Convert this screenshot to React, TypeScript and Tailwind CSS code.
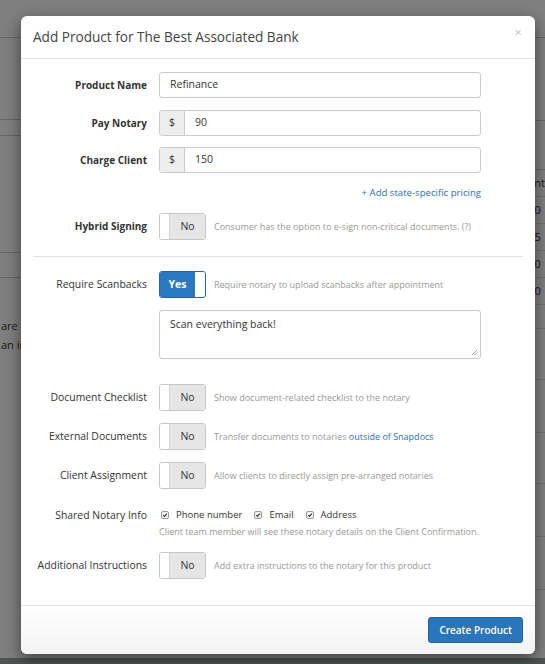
import React from 'react';

const font = { fontFamily: '"Open Sans", "Liberation Sans", sans-serif' };

function Toggle({ on }: { on?: boolean }) {
  if (on) {
    return (
      <div className="flex h-[27px] w-[47px] shrink-0 overflow-hidden rounded-[3px] border border-[#2168a8]">
        <div className="flex flex-1 items-center justify-center bg-[#2a78c1] text-[10.5px] font-bold text-white">Yes</div>
        <div className="w-[10px] rounded-r-[2px] bg-white" />
      </div>
    );
  }
  return (
    <div className="flex h-[27px] w-[47px] shrink-0 overflow-hidden rounded-[3px] border border-[#c8c8c8]">
      <div className="w-[10px] border-r border-[#d4d4d4] bg-white" />
      <div className="flex flex-1 items-center justify-center bg-[#e6e6e6] text-[10.5px] text-[#333]">No</div>
    </div>
  );
}

function Check({ label }: { label: string }) {
  return (
    <label className="flex items-center gap-[7px]">
      <span className="flex h-[8px] w-[8px] items-center justify-center rounded-[2px] border border-[#9a9a9a] bg-[#f2f2f2]">
        <svg viewBox="0 0 10 10" className="h-[6px] w-[6px]">
          <path d="M2 5.2 L4.2 7.4 L8 2.6" fill="none" stroke="#333" strokeWidth="1.8" />
        </svg>
      </span>
      <span className="text-[9.5px] text-[#333]">{label}</span>
    </label>
  );
}

function Row({ label, bold, children, className = '' }: { label: string; bold?: boolean; children: React.ReactNode; className?: string }) {
  return (
    <div className={`grid grid-cols-[126px_1fr] items-center ${className}`}>
      <div className={`whitespace-nowrap pr-[12px] text-right text-[#333] ${bold ? 'text-[10px] font-bold' : 'text-[10.4px]'}`}>{label}</div>
      <div className="flex items-center">{children}</div>
    </div>
  );
}

function ToggleRow({ label, desc, on, bold, className }: { label: string; desc: React.ReactNode; on?: boolean; bold?: boolean; className?: string }) {
  return (
    <Row label={label} bold={bold} className={className}>
      <Toggle on={on} />
      <span className="ml-[8px] whitespace-nowrap text-[9px] text-[#999]">{desc}</span>
    </Row>
  );
}

function Background() {
  return (
    <div className="h-[664px] w-[545px] bg-white text-[11px] text-[#333]">
      <div className="h-[38px] border-b border-[#ccc]" />
      <div className="flex h-[620px]">
        <div className="w-[272px]">
          <div className="h-[82px] border-b border-[#ccc]" />
          <div className="h-[16px] border-b border-[#ccc]" />
          <div className="h-[117px] border-b border-[#ccc]" />
          <div className="h-[25px] border-b border-[#ccc]" />
          <div className="pt-[38px] pl-[1px] leading-[19px]">
            <div>are in the queue</div>
            <div>an instructions</div>
          </div>
        </div>
        <div className="flex-1">
          <div className="h-[83px] border-b border-[#ccc]" />
          <div className="h-[49px] border-b border-[#ccc]" />
          {['ent', '00', '25', '00', '00'].map((t, i) => (
            <div key={i} className="flex h-[27px] items-center border-b border-[#ddd] pl-[262px]">{t}</div>
          ))}
          {[24, 51, 53, 51, 53, 53].map((h, i) => (
            <div key={i} style={{ height: h }} className="border-b border-[#ddd]" />
          ))}
        </div>
      </div>
      <div className="h-[6px] bg-[#98aaa3]" />
    </div>
  );
}

export default function App() {
  return (
    <div className="relative h-[664px] w-[545px] overflow-hidden" style={font}>
      <Background />
      <div className="absolute inset-0 bg-black/50" />
      <div className="absolute left-[21px] top-[16px] w-[514px] rounded-[6px] bg-white shadow-[0_5px_15px_rgba(0,0,0,0.5)]">
        <div className="flex h-[43px] items-center justify-between border-b border-[#e5e5e5] pl-[12px] pr-[13px]">
          <h4 className="pt-[1px] text-[13.6px] text-[#444]">Add Product for The Best Associated Bank</h4>
          <span className="-mt-[10px] text-[13px] leading-none text-[#c4c4c4]">×</span>
        </div>

        <div className="px-[12px] pt-[13px] pb-[26px]">
          <Row label="Product Name" bold className="mb-[12px]">
            <div className="flex h-[26px] w-[322px] items-center rounded-[3px] border border-[#ccc] px-[10px] text-[10.5px] text-[#333]">Refinance</div>
          </Row>
          <Row label="Pay Notary" bold className="mb-[11px]">
            <div className="flex h-[26px] w-[322px] overflow-hidden rounded-[3px] border border-[#ccc] text-[10.5px] text-[#333]">
              <span className="flex w-[25px] items-center justify-center border-r border-[#ccc] bg-[#eee]">$</span>
              <span className="flex items-center px-[10px]">90</span>
            </div>
          </Row>
          <Row label="Charge Client" bold>
            <div className="flex h-[26px] w-[322px] overflow-hidden rounded-[3px] border border-[#ccc] text-[10.5px] text-[#333]">
              <span className="flex w-[25px] items-center justify-center border-r border-[#ccc] bg-[#eee]">$</span>
              <span className="flex items-center px-[10px]">150</span>
            </div>
          </Row>
          <div className="mt-[13px] flex w-[448px] justify-end text-[9.6px] leading-[14px] text-[#2b70b6]">+ Add state-specific pricing</div>
          <ToggleRow label="Hybrid Signing" bold desc="Consumer has the option to e-sign non-critical documents. (?)" className="mt-[13px]" />

          <div className="mt-[16px] border-t border-[#e2e2e2]" />

          <ToggleRow label="Require Scanbacks" on desc="Require notary to upload scanbacks after appointment" className="mt-[14px]" />
          <Row label="" className="mt-[12px]">
            <div className="relative h-[49px] w-[322px] rounded-[3px] border border-[#ccc] px-[10px] pt-[6px] text-[10.5px] text-[#333]">
              Scan everything back!
              <svg viewBox="0 0 8 8" className="absolute bottom-[2px] right-[2px] h-[7px] w-[7px]">
                <path d="M1 7 L7 1 M4 7 L7 4" stroke="#888" strokeWidth="0.9" />
              </svg>
            </div>
          </Row>

          <ToggleRow label="Document Checklist" desc="Show document-related checklist to the notary" className="mt-[25px]" />
          <ToggleRow
            label="External Documents"
            desc={<>Transfer documents to notaries <span className="text-[#2b70b6]">outside of Snapdocs</span></>}
            className="mt-[12px]"
          />
          <ToggleRow label="Client Assignment" desc="Allow clients to directly assign pre-arranged notaries" className="mt-[12px]" />

          <div className="mt-[17px] grid grid-cols-[126px_1fr]">
            <div className="pr-[12px] text-right text-[10.4px] leading-[18px] text-[#333]">Shared Notary Info</div>
            <div>
              <div className="flex h-[18px] items-center gap-[12px] pl-[2px]">
                <Check label="Phone number" />
                <Check label="Email" />
                <Check label="Address" />
              </div>
              <div className="text-[9px] leading-[16px] text-[#999]">Client team member will see these notary details on the Client Confirmation.</div>
            </div>
          </div>

          <ToggleRow label="Additional Instructions" desc="Add extra instructions to the notary for this product" className="mt-[12px]" />
        </div>

        <div className="flex h-[49px] items-center justify-end rounded-b-[6px] border-t border-[#e5e5e5] bg-gradient-to-b from-white to-[#f3f3f3] pr-[12px]">
          <button className="h-[26px] rounded-[3px] border border-[#22649f] bg-[#2a76bc] px-[10px] text-[10px] font-semibold text-white">Create Product</button>
        </div>
      </div>
    </div>
  );
}
